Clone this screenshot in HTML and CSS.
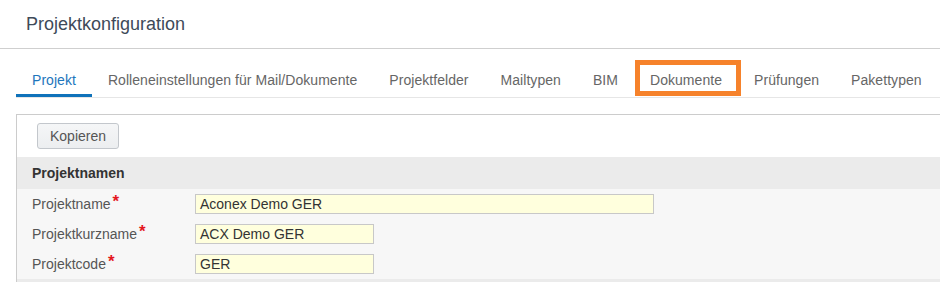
FILE: index.html
```html
<!DOCTYPE html>
<html lang="de">
<head>
<meta charset="utf-8">
<title>Projektkonfiguration</title>
<link rel="stylesheet" href="styles.css">
</head>
<body>
<header class="page-header">
  <h1 class="page-title">Projektkonfiguration</h1>
</header>
<nav class="tabs">
  <a class="tab tab-active">Projekt</a>
  <a class="tab">Rolleneinstellungen für Mail/Dokumente</a>
  <a class="tab">Projektfelder</a>
  <a class="tab">Mailtypen</a>
  <a class="tab">BIM</a>
  <a class="tab tab-marked">Dokumente<span class="highlight-box"></span></a>
  <a class="tab">Prüfungen</a>
  <a class="tab">Pakettypen</a>
</nav>
<section class="panel">
  <div class="toolbar">
    <button class="btn">Kopieren</button>
  </div>
  <div class="section-head">Projektnamen</div>
  <div class="form-body">
    <div class="row">
      <label class="label">Projektname<span class="req">*</span></label>
      <div class="field field-wide">Aconex Demo GER</div>
    </div>
    <div class="row">
      <label class="label">Projektkurzname<span class="req">*</span></label>
      <div class="field field-short">ACX Demo GER</div>
    </div>
    <div class="row">
      <label class="label">Projektcode<span class="req">*</span></label>
      <div class="field field-short">GER</div>
    </div>
  </div>
  <div class="section-foot"></div>
</section>
</body>
</html>
```
FILE: styles.css
```css
* { box-sizing: border-box; }
html, body {
  margin: 0;
  padding: 0;
  background: #fff;
  font-family: "Liberation Sans", Arial, sans-serif;
  overflow: hidden;
}
.page-header {
  height: 49px;
  border-bottom: 1px solid #cfcfcf;
  padding: 14px 26px 0;
}
.page-title {
  margin: 0;
  font-size: 18px;
  line-height: 20px;
  font-weight: normal;
  color: #3e4a59;
}
.tabs {
  display: flex;
  margin: 14px 0 0 16px;
  border-bottom: 1px solid #e6e6e6;
}
.tab {
  position: relative;
  padding: 7px 16px 4px;
  font-size: 14px;
  line-height: 20px;
  letter-spacing: 0.05px;
  color: #666;
  white-space: nowrap;
  border-bottom: 3px solid transparent;
}
.tab-active {
  color: #1d76bc;
  border-bottom-color: #0f72ba;
}
.highlight-box {
  position: absolute;
  left: 1px;
  right: -3px;
  top: -3px;
  bottom: -2px;
  border: 5px solid #f6822b;
}
.panel {
  margin: 16px 0 0 16px;
  border-top: 1px solid #cccccc;
  border-left: 1px solid #cccccc;
}
.toolbar {
  background: #fff;
  padding: 8px 20px;
  height: 42px;
}
.btn {
  display: block;
  height: 26px;
  padding: 0 12px;
  font-family: "Liberation Sans", Arial, sans-serif;
  font-size: 14px;
  color: #555;
  background: linear-gradient(#f5f6f7, #eceef0);
  border: 1px solid #c3c7cc;
  border-radius: 3px;
}
.section-head {
  height: 32px;
  line-height: 32px;
  background: #ebebeb;
  padding-left: 15px;
  font-size: 14px;
  font-weight: bold;
  color: #333;
}
.form-body {
  background: #f7f7f7;
  padding-left: 15px;
}
.row {
  display: grid;
  grid-template-columns: 163px auto;
  align-items: center;
  height: 30px;
}
.label {
  font-size: 14px;
  line-height: 20px;
  color: #555;
  white-space: nowrap;
}
.req {
  color: #e4171e;
  font-size: 17px;
  font-weight: bold;
  line-height: 0;
  margin-left: 2px;
  vertical-align: 2px;
}
.field {
  height: 20px;
  line-height: 18px;
  padding-left: 4px;
  background: #ffffdd;
  border: 1px solid #c8c8c8;
  font-size: 14px;
  color: #333;
}
.field-wide { width: 459px; }
.field-short { width: 179px; }
.section-foot {
  height: 10px;
  background: #ebebeb;
}
```
